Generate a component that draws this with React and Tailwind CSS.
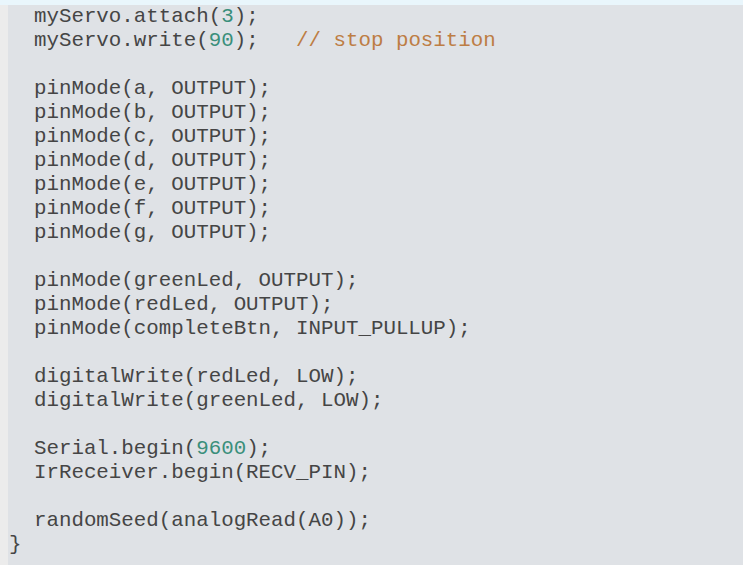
import React from "react";

const N = ({children}) => <span className="text-[#3a8f7b]">{children}</span>;
const C = ({children}) => <span className="text-[#bd7d44]">{children}</span>;

export default function App() {
  // setup() tail, as shown in the editor
  const code = [
    <>  myServo.attach(<N>3</N>);</>,
    <>  myServo.write(<N>90</N>);   <C>// stop position</C></>,
    "",
    "  pinMode(a, OUTPUT);",
    "  pinMode(b, OUTPUT);",
    "  pinMode(c, OUTPUT);",
    "  pinMode(d, OUTPUT);",
    "  pinMode(e, OUTPUT);",
    "  pinMode(f, OUTPUT);",
    "  pinMode(g, OUTPUT);",
    "",
    "  pinMode(greenLed, OUTPUT);",
    "  pinMode(redLed, OUTPUT);",
    "  pinMode(completeBtn, INPUT_PULLUP);",
    "",
    "  digitalWrite(redLed, LOW);",
    "  digitalWrite(greenLed, LOW);",
    "",
    <>  Serial.begin(<N>9600</N>);</>,
    "  IrReceiver.begin(RECV_PIN);",
    "",
    "  randomSeed(analogRead(A0));",
    "}",
  ];

  return (
    <div className="flex h-[565px] w-[743px] flex-col overflow-hidden bg-[#dfe2e6]">
      <div className="h-[5px] shrink-0 bg-[#e9f6fc]" />
      <div className="flex flex-1">
        <div className="w-[8px] shrink-0 bg-[#ececec]" />
        <pre className="flex-1 pl-[1px] font-['Courier_New','Nimbus_Mono_PS','FreeMono','Liberation_Mono',monospace] text-[20.8px] leading-[24px] text-[#454545]">
          {code.map((l, i) => (
            <div key={i} className="h-[24px] whitespace-pre">{l}</div>
          ))}
        </pre>
      </div>
    </div>
  );
}
